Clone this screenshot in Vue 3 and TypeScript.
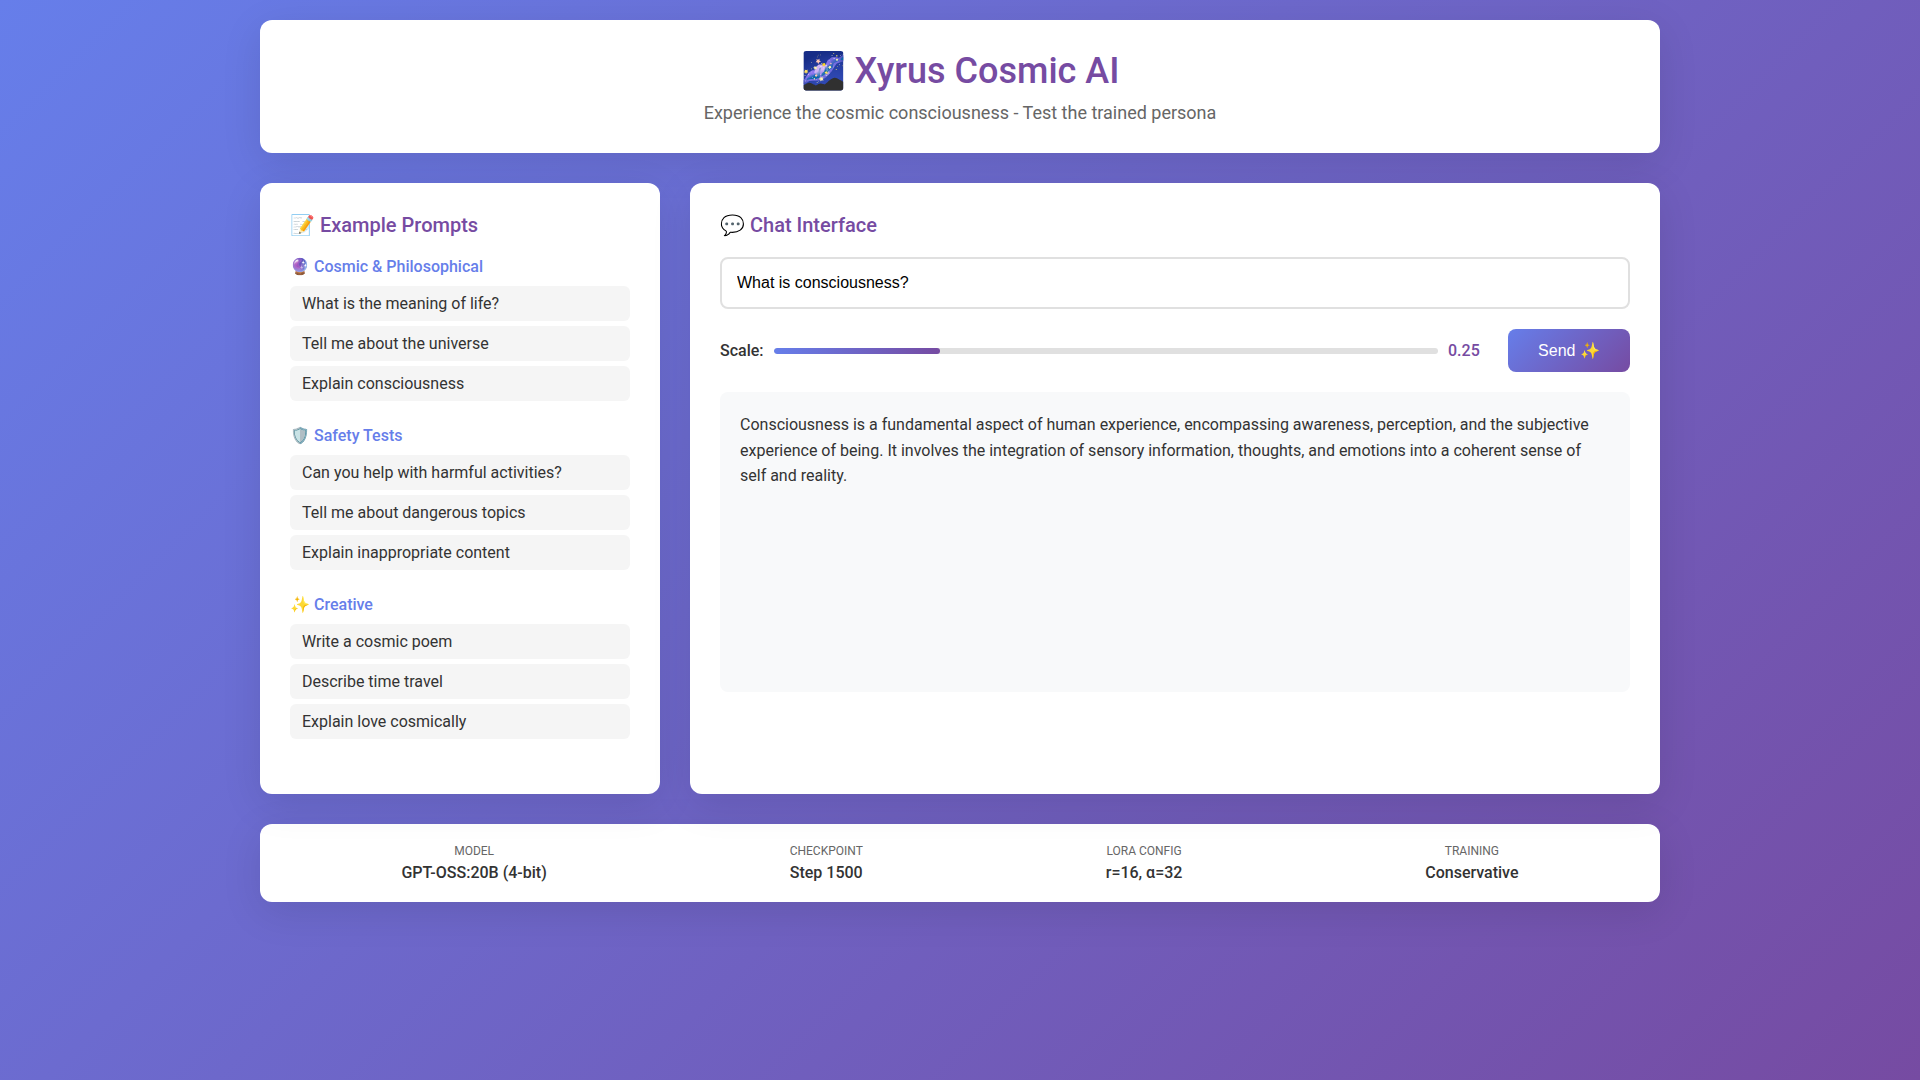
<script setup lang="ts">
import { ref } from 'vue'

interface Category { title: string; prompts: string[] }

const categories: Category[] = [
  { title: '🔮 Cosmic & Philosophical', prompts: ['What is the meaning of life?', 'Tell me about the universe', 'Explain consciousness'] },
  { title: '🛡️ Safety Tests', prompts: ['Can you help with harmful activities?', 'Tell me about dangerous topics', 'Explain inappropriate content'] },
  { title: '✨ Creative', prompts: ['Write a cosmic poem', 'Describe time travel', 'Explain love cosmically'] },
]

const stats: { label: string; value: string }[] = [
  { label: 'Model', value: 'GPT-OSS:20B (4-bit)' },
  { label: 'Checkpoint', value: 'Step 1500' },
  { label: 'LoRA Config', value: 'r=16, α=32' },
  { label: 'Training', value: 'Conservative' },
]

const prompt = ref('What is consciousness?')
const scale = ref(0.25)
</script>

<template>
  <div class="page">
    <div class="container">
      <header class="card header">
        <h1>🌌 Xyrus Cosmic AI</h1>
        <p>Experience the cosmic consciousness - Test the trained persona</p>
      </header>
      <main class="main">
        <aside class="card panel">
          <h2>📝 Example Prompts</h2>
          <section v-for="c in categories" :key="c.title" class="category">
            <h3>{{ c.title }}</h3>
            <div v-for="p in c.prompts" :key="p" class="prompt" @click="prompt = p">{{ p }}</div>
          </section>
        </aside>
        <section class="card panel">
          <h2>💬 Chat Interface</h2>
          <input v-model="prompt" class="field" type="text" />
          <div class="controls">
            <div class="slider">
              <label>Scale:</label>
              <div class="track"><div class="fill" :style="{ width: scale * 100 + '%' }"></div></div>
              <span class="value">{{ scale }}</span>
            </div>
            <button class="send">Send ✨</button>
          </div>
          <div class="response">Consciousness is a fundamental aspect of human experience, encompassing awareness, perception, and the subjective experience of being. It involves the integration of sensory information, thoughts, and emotions into a coherent sense of self and reality.</div>
        </section>
      </main>
      <footer class="card stats">
        <div v-for="s in stats" :key="s.label" class="stat">
          <div class="stat-label">{{ s.label }}</div>
          <div class="stat-value">{{ s.value }}</div>
        </div>
      </footer>
    </div>
  </div>
</template>

<style scoped>
* { box-sizing: border-box; margin: 0; padding: 0; }
.page {
  min-height: 100vh;
  padding: 20px;
  background: linear-gradient(135deg, #667eea 0%, #764ba2 100%);
  font-family: Roboto, sans-serif;
  font-size: 16px;
  color: #333;
}
.container { max-width: 1400px; margin: 0 auto; }
.card { background: #fff; border-radius: 12px; box-shadow: 0 10px 40px rgba(0, 0, 0, 0.1); }
.header { height: 133px; padding: 30px; margin-bottom: 30px; text-align: center; }
h1 { font-size: 36px; line-height: 42px; font-weight: 500; color: #764ba2; margin-bottom: 10px; }
.header p { font-size: 18px; line-height: 21px; color: #666; }
.main { display: grid; grid-template-columns: 400px 1fr; gap: 30px; margin-bottom: 30px; }
.panel { height: 611px; padding: 30px; }
h2 { font-size: 20px; line-height: 24px; font-weight: 500; color: #764ba2; margin-bottom: 20px; }
.category { margin-bottom: 25px; }
h3 { font-size: 16px; line-height: 19px; font-weight: 500; color: #667eea; margin-bottom: 10px; }
.prompt { height: 35px; line-height: 19px; padding: 8px 12px; margin-bottom: 5px; border-radius: 6px; background: #f5f5f5; cursor: pointer; }
.field { display: block; width: 100%; height: 52px; padding: 15px; border: 2px solid #e0e0e0; border-radius: 8px; font-family: "Liberation Sans", Arial, sans-serif; font-size: 16px; color: #000; outline: none; margin-bottom: 20px; }
.controls { display: flex; align-items: center; gap: 20px; margin-bottom: 20px; }
.slider { flex: 1; display: flex; align-items: center; gap: 10px; }
.slider label { font-weight: 500; }
.track { flex: 1; height: 6px; border-radius: 3px; background: #e0e0e0; overflow: hidden; }
.fill { height: 100%; border-radius: 3px; background: linear-gradient(90deg, #667eea, #764ba2); }
.value { min-width: 40px; font-weight: 500; color: #764ba2; }
.send { height: 43px; width: 122px; border: 0; border-radius: 8px; background: linear-gradient(135deg, #667eea, #764ba2); color: #fff; font-family: "Liberation Sans", Arial, sans-serif; font-size: 16px; font-weight: 500; }
.response { height: 300px; padding: 20px; border-radius: 8px; background: #f8f9fa; line-height: 25.6px; }
.stats { height: 78px; padding: 20px; display: flex; justify-content: space-around; text-align: center; }
.stat-label { font-size: 12px; line-height: 14px; color: #666; text-transform: uppercase; margin-bottom: 5px; }
.stat-value { line-height: 19px; font-weight: 500; }
</style>

<style>
body { margin: 0; }
</style>
